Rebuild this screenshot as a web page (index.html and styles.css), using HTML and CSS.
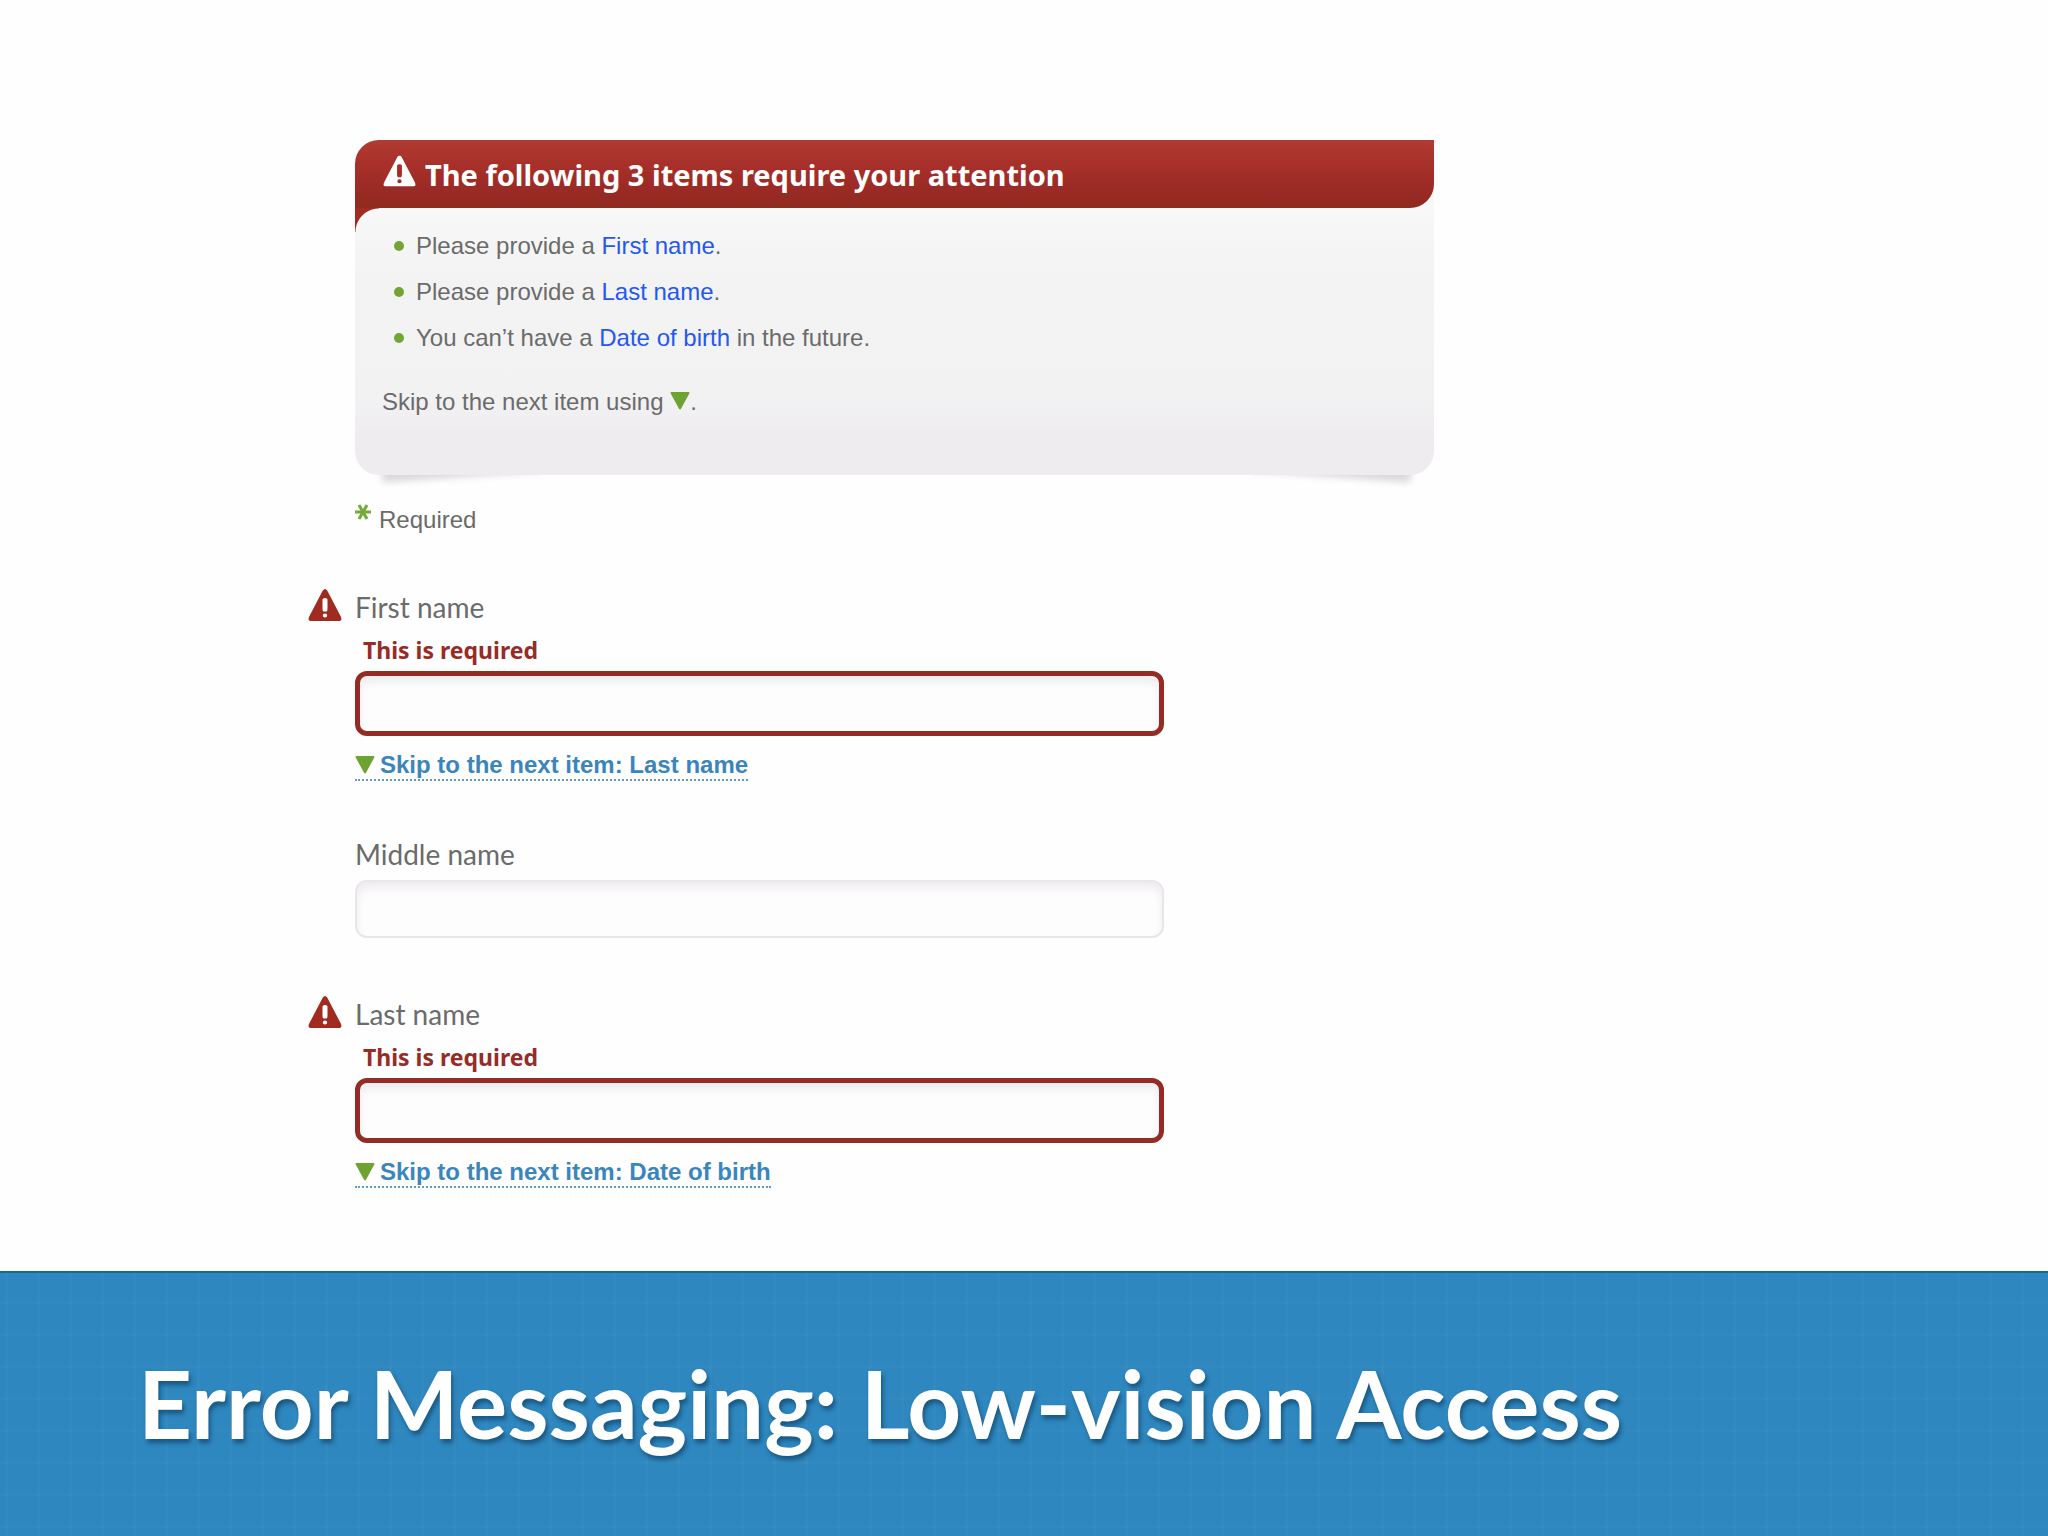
FILE: index.html
```html
<!DOCTYPE html>
<html lang="en">
<head>
  <meta charset="utf-8">
  <meta name="viewport" content="width=device-width, initial-scale=1">
  <title>Error Messaging: Low-vision Access</title>
  <link rel="stylesheet" href="styles.css">
</head>
<body>
  <svg class="sprite" aria-hidden="true">
    <symbol id="down" viewBox="0 0 20 18"><path d="M1.500 0h17q1.500 0 .8 1.400L11 16.800q-1 1.600-2 0L.7 1.400Q0 0 1.500 0z"/></symbol>
    <symbol id="warn" viewBox="0 0 34 32"><path fill-rule="evenodd" d="M14.800 1.500Q17-1.500 19.200 1.500L32.800 27.500Q34.800 32 30.500 32H3.500Q-.8 32 1.200 27.500zM14.500 10.500v9q0 2.500 1 3h3q1-.5 1-3v-9q0-1.500-2.500-1.500t-2.500 1.500zM17 24.500a2.200 2 0 1 0 0 4 2.200 2 0 1 0 0-4z"/></symbol>
  </svg>
  <main class="content">
    <section class="panel" aria-labelledby="panel-title">
      <header class="panel-head">
        <svg class="panel-icon" viewBox="0 0 34 32" aria-hidden="true"><use href="#warn"/></svg>
        <h2 class="panel-title" id="panel-title">The following 3 items require your attention</h2>
      </header>
      <div class="panel-body">
        <ul class="errors">
          <li>Please provide a <a href="#first">First name</a>.</li>
          <li>Please provide a <a href="#last">Last name</a>.</li>
          <li>You can’t have a <a href="#birth">Date of birth</a> in the future.</li>
        </ul>
        <p class="hint">Skip to the next item using <svg class="arrow" role="img" aria-label="down arrow"><use href="#down"/></svg>.</p>
      </div>
    </section>

    <form class="form">
      <p class="required">
        <svg class="star" viewBox="0 0 16 16" aria-hidden="true"><path d="M0 8h16M4 1l8 14M12 1l-8 14"/></svg>
        Required
      </p>

      <div class="field">
        <div class="label-row">
          <svg class="field-icon" aria-hidden="true"><use href="#warn"/></svg>
          <label for="first">First name</label>
        </div>
        <p class="error" id="first-error">This is required</p>
        <input class="input invalid" id="first" type="text" aria-invalid="true" aria-describedby="first-error">
        <a class="skip" href="#last"><svg class="arrow" aria-hidden="true"><use href="#down"/></svg>Skip to the next item: Last name</a>
      </div>

      <div class="field optional">
        <div class="label-row"><label for="middle">Middle name</label></div>
        <input class="input" id="middle" type="text">
      </div>

      <div class="field">
        <div class="label-row">
          <svg class="field-icon" aria-hidden="true"><use href="#warn"/></svg>
          <label for="last">Last name</label>
        </div>
        <p class="error" id="last-error">This is required</p>
        <input class="input invalid" id="last" type="text" aria-invalid="true" aria-describedby="last-error">
        <a class="skip" href="#birth"><svg class="arrow" aria-hidden="true"><use href="#down"/></svg>Skip to the next item: Date of birth</a>
      </div>
    </form>
  </main>
  <footer class="band">
    <h1 class="title">Error Messaging: Low-vision Access</h1>
  </footer>
</body>
</html>
```
FILE: styles.css
```css
* { box-sizing: border-box; }

body {
  margin: 0;
  min-height: 100vh;
  display: flex;
  flex-direction: column;
  background: #fefefe;
  color: #6b6b6b;
  font: 24px/32px "Liberation Sans", Arial, sans-serif;
}

h1, h2, p, ul { margin: 0; padding: 0; }

.sprite { display: none; }

.content {
  flex: 1;
  padding: 140px 30% 20px 355px;
}

/* Error summary, with a light corner behind the rounded end of the heading */
.panel {
  position: relative;
  z-index: 0;
  background: linear-gradient(#f8f8f8, #f8f8f8) right 40px / 30px 40px no-repeat;
}

/* Lifted-corner shadows */
.panel::before,
.panel::after {
  content: "";
  position: absolute;
  z-index: -1;
  bottom: 10px;
  width: 160px;
  height: 20px;
  box-shadow: 0 12px 7px rgba(0, 0, 0, 0.15);
}
.panel::before { left: 26px; transform: rotate(-4deg); }
.panel::after { right: 22px; transform: rotate(4deg); }

.panel-head {
  display: flex;
  align-items: center;
  gap: 9px;
  height: 68px;
  padding: 2px 28px 0;
  border-radius: 24px 0 24px 0;
  background: linear-gradient(#b03c31, #a8302a 35%, #992a25 75%, #8f2a1e);
  color: #fff;
}

.panel-icon {
  width: 33px;
  height: 32px;
  margin-bottom: 8px;
  fill: #fff;
}

.panel-title {
  font: 700 29px/36px "Noto Sans", sans-serif;
}

.panel-body {
  padding: 15px 28px 57px 27px;
  border-radius: 0 0 24px 24px;
  background:
    radial-gradient(circle at 24px 24px, transparent 23px, #a02c24 24px) 0 0 / 24px 24px no-repeat,
    linear-gradient(#f8f8f8, #f4f3f4 25%, #f3f2f3 70%, #eeecef 85%, #eeecef);
}

.errors { list-style: none; }
.errors li {
  display: flex;
  align-items: center;
  line-height: 46px;
  white-space: pre-wrap;
}
.errors li::before {
  content: "";
  width: 10px;
  height: 10px;
  margin: 0 12px;
  border-radius: 50%;
  background: #72a533;
}
.errors a {
  color: #2458ee;
  text-decoration: none;
}

.hint { margin-top: 25px; }

.arrow {
  width: 20px;
  height: 18px;
  fill: #6ea334;
}

/* Form */
.required {
  display: flex;
  gap: 8px;
  margin: 29px 0 51px;
}
.star {
  width: 16px;
  height: 16px;
  fill: none;
  stroke: #72ab3a;
  stroke-width: 3;
}

.field {
  width: 75%;
  margin-bottom: 52px;
}
.optional { padding-bottom: 4px; }

.label-row {
  display: flex;
  align-items: center;
  font: 28px/40px Lato, sans-serif;
}
.field-icon {
  width: 34px;
  height: 32px;
  margin: 0 13px 4px -47px;
  fill: #a02b20;
}
.optional .label-row { margin-bottom: 6px; }

.error {
  padding: 2px 0 0 8px;
  color: #962c28;
  font: 700 23px/42px "Noto Sans", sans-serif;
}

.input {
  display: block;
  width: 100%;
  height: 58px;
  padding: 0 16px;
  border: 2px solid #e8e6e8;
  border-radius: 12px;
  background: #fefdfe;
  box-shadow: inset 0 6px 8px #eeecee;
  color: #444;
  font: inherit;
}
.invalid {
  height: 65px;
  border: 5px solid #932c25;
}

.skip {
  display: inline-flex;
  align-items: center;
  gap: 5px;
  margin-top: 15px;
  border-bottom: 2px dotted #5d9cca;
  color: #3b85bd;
  font-weight: 700;
  line-height: 28px;
  text-decoration: none;
}

/* Slide title band */
.band {
  padding: 71px 143px 74px 138px;
  border-top: 2px solid #22668f;
  background:
    linear-gradient(90deg, rgba(255, 255, 255, 0.025) 3px, transparent 3px) 5px 0 / 32px 32px,
    linear-gradient(rgba(255, 255, 255, 0.02) 3px, transparent 3px) 0 28px / 32px 32px,
    #2e87bf;
}
.title {
  color: #fff;
  font: 700 94px/118px Lato, sans-serif;
  text-shadow: 2px 4px 4px rgba(10, 50, 80, 0.55);
}
```
